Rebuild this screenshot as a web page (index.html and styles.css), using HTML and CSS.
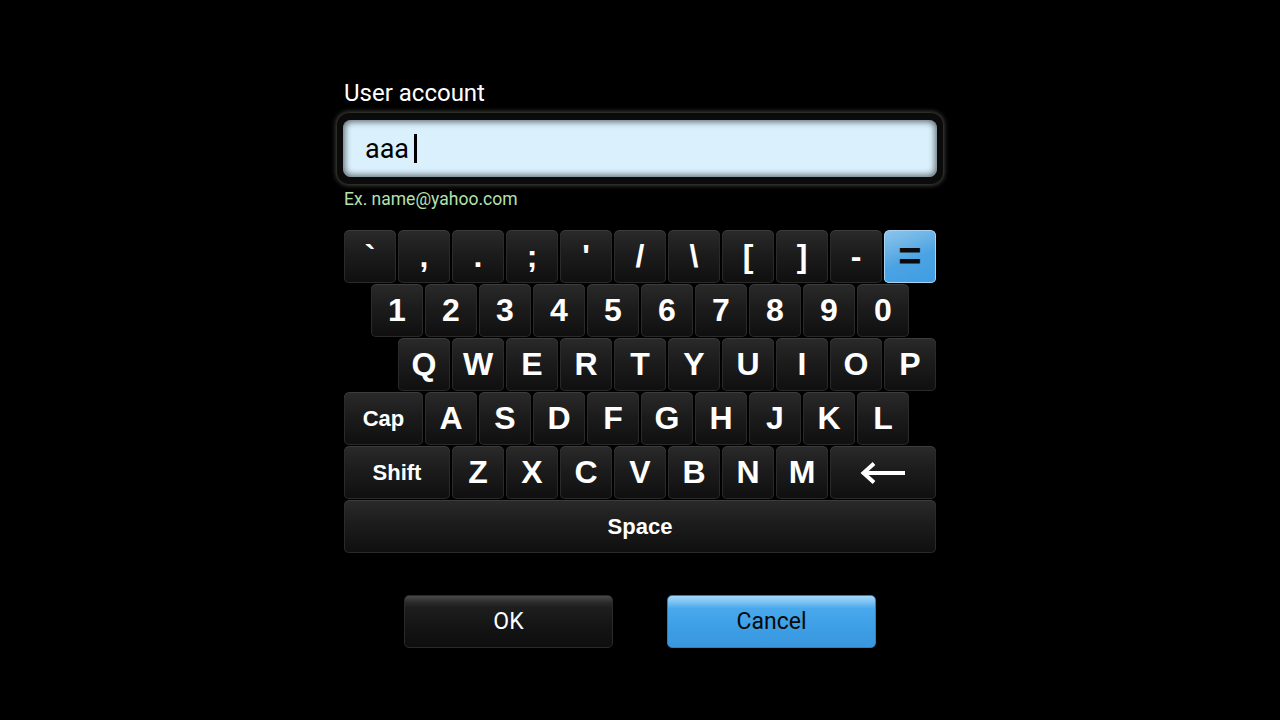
FILE: index.html
```html
<!DOCTYPE html>
<html>
<head>
<meta charset="utf-8">
<link rel="stylesheet" href="styles.css">
</head>
<body>
<div class="panel">
  <div class="label">User account</div>
  <div class="field-frame">
    <div class="field"><span class="value">aaa</span><span class="caret"></span></div>
  </div>
  <div class="hint">Ex. name@yahoo.com</div>

  <div class="keyboard">
    <div class="row">
      <div class="key">`</div><div class="key">,</div><div class="key">.</div><div class="key">;</div><div class="key">'</div><div class="key">/</div><div class="key">\</div><div class="key">[</div><div class="key">]</div><div class="key">-</div><div class="key key-active">=</div>
    </div>
    <div class="row row-half">
      <div class="key">1</div><div class="key">2</div><div class="key">3</div><div class="key">4</div><div class="key">5</div><div class="key">6</div><div class="key">7</div><div class="key">8</div><div class="key">9</div><div class="key">0</div>
    </div>
    <div class="row row-one">
      <div class="key">Q</div><div class="key">W</div><div class="key">E</div><div class="key">R</div><div class="key">T</div><div class="key">Y</div><div class="key">U</div><div class="key">I</div><div class="key">O</div><div class="key">P</div>
    </div>
    <div class="row">
      <div class="key key-cap key-word">Cap</div><div class="key">A</div><div class="key">S</div><div class="key">D</div><div class="key">F</div><div class="key">G</div><div class="key">H</div><div class="key">J</div><div class="key">K</div><div class="key">L</div>
    </div>
    <div class="row">
      <div class="key key-wide key-word">Shift</div><div class="key">Z</div><div class="key">X</div><div class="key">C</div><div class="key">V</div><div class="key">B</div><div class="key">N</div><div class="key">M</div>
      <div class="key key-wide"><svg class="arrow" width="46" height="24" viewBox="0 0 46 24"><path d="M3 12 H45" stroke="#fff" stroke-width="4" fill="none"/><path d="M14 2.5 L3.5 12 L14 21.5" stroke="#fff" stroke-width="4" fill="none" stroke-linejoin="miter"/></svg></div>
    </div>
    <div class="row">
      <div class="key key-space key-word">Space</div>
    </div>
  </div>

  <div class="buttons">
    <div class="btn btn-dark">OK</div>
    <div class="btn btn-blue">Cancel</div>
  </div>
</div>
</body>
</html>
```
FILE: styles.css
```css
html, body {
  margin: 0;
  padding: 0;
  background: #000;
}
body {
  width: 1280px;
  height: 720px;
  overflow: hidden;
  font-family: Roboto, "Liberation Sans", sans-serif;
}
.panel {
  width: 594px;
  margin: 0 auto;
  padding-top: 79px;
}
.label {
  color: #fff;
  font-size: 24px;
  line-height: 28px;
  padding-left: 1px;
}
.field-frame {
  margin: 6px -6px 0;
  padding: 7px 6px;
  background: #0b0b0b;
  border-radius: 12px;
  box-shadow: 0 0 5px 1px rgba(170, 170, 160, 0.45);
}
.field {
  height: 57px;
  background: #daf1fd;
  border-radius: 8px;
  box-shadow: inset 0 0 6px 2px rgba(0, 0, 0, 0.55);
  display: flex;
  align-items: center;
  padding-left: 22px;
}
.value {
  color: #000;
  font-size: 27px;
  line-height: 30px;
}
.caret {
  width: 3px;
  height: 29px;
  background: #000;
  margin-left: 5px;
}
.hint {
  color: #b3e2ad;
  font-size: 17.5px;
  line-height: 20px;
  margin-top: 5px;
  padding-left: 1px;
}
.keyboard {
  margin-top: 21px;
  display: flex;
  flex-direction: column;
}
.row {
  display: flex;
}
.row-half { padding-left: 27px; }
.row-one { padding-left: 54px; }
.key {
  width: 54px;
  height: 54px;
  box-sizing: border-box;
  border: 1px solid transparent;
  border-top-width: 0;
  background-clip: padding-box;
  border-radius: 6px;
  background-image: linear-gradient(#2a2a2a 0%, #1c1c1c 45%, #0f0f0f 100%);
  box-shadow: inset 0 1px 0 #3c3c3c, inset 0 0 0 1px #2a2a2a;
  color: #fff;
  font-family: "Liberation Sans", Arial, sans-serif;
  font-weight: bold;
  font-size: 32px;
  display: flex;
  align-items: center;
  justify-content: center;
  flex: none;
}
.key-word { font-size: 22px; }
.key-cap { width: 81px; }
.key-wide { width: 108px; }
.key-space { width: 594px; }
.key-active {
  background-image: linear-gradient(160deg, #8cc6ee 0%, #6cb3e6 30%, #4ba3e3 55%, #3f9de2 100%);
  box-shadow: inset 0 0 0 1px #a9d3f0;
  color: #0a0a0a;
  font-size: 40px;
}
.arrow { display: block; }
.buttons {
  display: flex;
  justify-content: center;
  gap: 54px;
  margin-top: 41px;
}
.btn {
  width: 209px;
  height: 53px;
  box-sizing: border-box;
  border-radius: 5px;
  display: flex;
  align-items: center;
  justify-content: center;
  font-size: 23px;
}
.btn-dark {
  color: #fff;
  border: 1px solid #2a2a2a;
  background: linear-gradient(#4a4a4a 0%, #2c2c2c 12%, #1e1e1e 22%, #141414 60%, #0e0e0e 100%);
}
.btn-blue {
  color: #0a0a0a;
  border: 1px solid #2f7fc0;
  background: linear-gradient(#a2d8fb 0%, #7cc3f3 12%, #4aa9ec 24%, #3d9fe6 60%, #3a97de 100%);
}
```
